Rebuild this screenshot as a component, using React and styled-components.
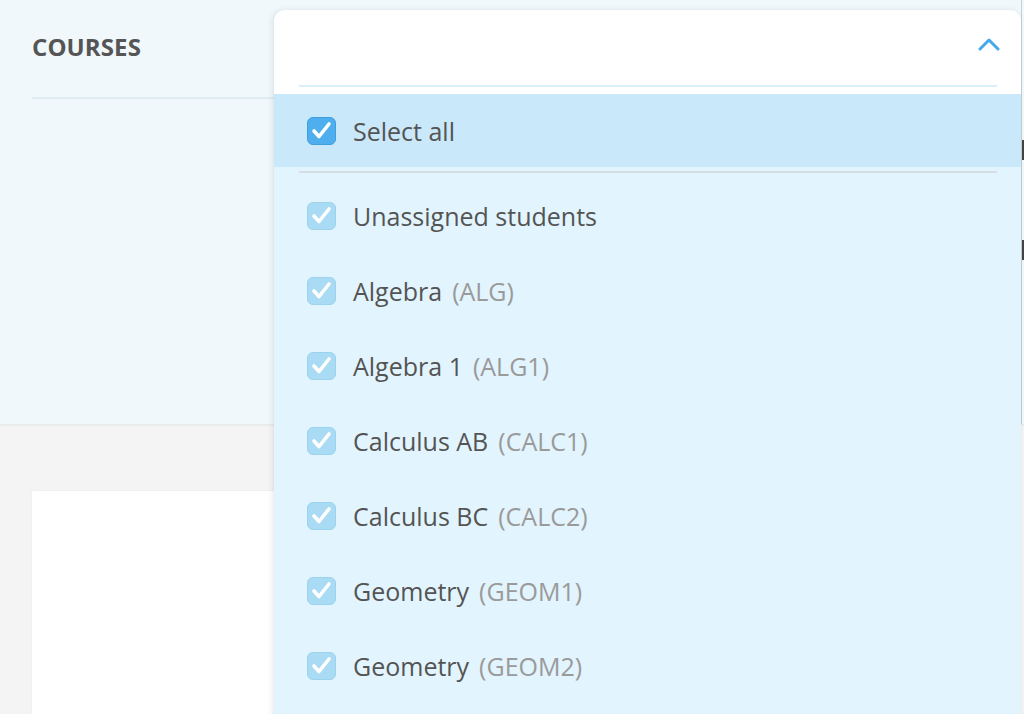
import styled, { createGlobalStyle } from 'styled-components';

const GlobalStyle = createGlobalStyle`
  html, body {
    margin: 0;
    padding: 0;
  }
  body {
    font-family: 'Open Sans', 'Liberation Sans', sans-serif;
    background: #f4f4f4;
  }
`;

const Page = styled.div`
  position: relative;
  width: 1024px;
  height: 714px;
  overflow: hidden;
  display: flex;
  flex-direction: column;
  background: #f4f4f4;
`;

const TopPanel = styled.div`
  height: 425px;
  flex-shrink: 0;
  background: #f0f8fb;
  border-bottom: 1px solid #e4e9eb;
  box-shadow: 0 1px 2px rgba(0, 0, 0, 0.04);
  padding: 0 0 0 32px;
  box-sizing: border-box;
  display: flex;
`;

const SideHead = styled.div`
  width: 242px;
  height: 99px;
  border-bottom: 2px solid #dfedf3;
  display: flex;
  align-items: center;
  box-sizing: border-box;
  padding-bottom: 4px;
`;

const Title = styled.h2`
  margin: 0;
  font-size: 24px;
  font-weight: 700;
  color: #555;
  letter-spacing: 0.1px;
`;

const EdgeRail = styled.div`
  margin-left: auto;
  width: 2px;
  border-left: 1px solid #c9cfd2;
  display: flex;
  flex-direction: column;
  padding-top: 140px;
  gap: 80px;
`;

const EdgeTick = styled.span`
  display: block;
  width: 3px;
  height: 20px;
  background: #444;
`;

const Lower = styled.div`
  flex: 1;
  padding: 66px 0 0 32px;
  display: flex;
`;

const Card = styled.div`
  width: 300px;
  background: #fff;
  box-shadow: 0 0 2px rgba(0, 0, 0, 0.05);
`;

const Dropdown = styled.div`
  position: absolute;
  left: 274px;
  top: 10px;
  width: 747px;
  bottom: -20px;
  background: #e2f4fd;
  border-radius: 11px 11px 0 0;
  box-shadow: -2px 0 6px rgba(0, 0, 0, 0.08), 0 0 2px rgba(0, 0, 0, 0.06);
  overflow: hidden;
  display: flex;
  flex-direction: column;
`;

const Header = styled.div`
  background: #fff;
  padding: 0 24px 7px 25px;
`;

const HeaderBar = styled.div`
  height: 77px;
  border-bottom: 2px solid #dbeff9;
  display: flex;
  align-items: center;
  justify-content: flex-end;
  padding-bottom: 4px;
  box-sizing: border-box;
`;

const Chevron = styled.svg`
  width: 22px;
  height: 14px;
  margin-right: -3px;
  margin-bottom: 4px;
`;

const Row = styled.div`
  height: ${(p) => (p.$all ? '73px' : '75px')};
  display: flex;
  align-items: center;
  padding-left: 33px;
  background: ${(p) => (p.$all ? '#c9e8f9' : 'transparent')};
  font-size: 25px;
  color: #545454;
`;

const Divider = styled.div`
  height: 2px;
  margin: 4px 24px 5px 25px;
  background: #d7dee1;
`;

const Box = styled.span`
  width: 29px;
  height: 28px;
  border-radius: 6px;
  box-sizing: border-box;
  background: ${(p) => (p.$strong ? '#4eaeee' : '#a9dbf4')};
  border: 1px solid ${(p) => (p.$strong ? '#3e9fe0' : '#9bd2ee')};
  display: flex;
  align-items: center;
  justify-content: center;
  margin-right: 17px;
  flex-shrink: 0;
`;

const Code = styled.span`
  color: #9a9a9a;
  margin-left: 10px;
`;

const Check = () => (
  <svg width="21" height="19" viewBox="0 0 21 19">
    <path
      d="M3 10 L8 15.5 L18 3"
      fill="none"
      stroke="#fff"
      strokeWidth="3.6"
      strokeLinecap="round"
      strokeLinejoin="round"
    />
  </svg>
);

const courses = [
  { name: 'Unassigned students' },
  { name: 'Algebra', code: 'ALG' },
  { name: 'Algebra 1', code: 'ALG1' },
  { name: 'Calculus AB', code: 'CALC1' },
  { name: 'Calculus BC', code: 'CALC2' },
  { name: 'Geometry', code: 'GEOM1' },
  { name: 'Geometry', code: 'GEOM2' },
];

const App = () => {
  return (
    <Page>
      <GlobalStyle />
      <TopPanel>
        <SideHead>
          <Title>COURSES</Title>
        </SideHead>
        <EdgeRail>
          <EdgeTick />
          <EdgeTick />
        </EdgeRail>
      </TopPanel>
      <Lower>
        <Card />
      </Lower>

      <Dropdown>
        <Header>
          <HeaderBar>
            <Chevron viewBox="0 0 22 14">
              <path
                d="M2 12 L11 3 L20 12"
                fill="none"
                stroke="#45a8ec"
                strokeWidth="3"
                strokeLinecap="round"
                strokeLinejoin="round"
              />
            </Chevron>
          </HeaderBar>
        </Header>
        <Row $all>
          <Box $strong>
            <Check />
          </Box>
          Select all
        </Row>
        <Divider />
        {courses.map((c, i) => (
          <Row key={i}>
            <Box>
              <Check />
            </Box>
            {c.name}
            {c.code && <Code>({c.code})</Code>}
          </Row>
        ))}
      </Dropdown>
    </Page>
  );
};

export default App;
